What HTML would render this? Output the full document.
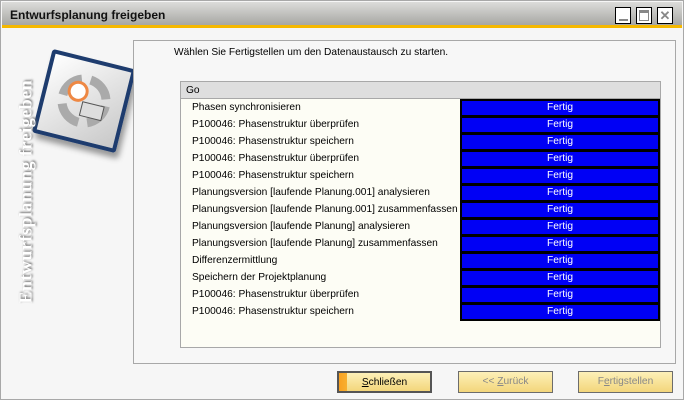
<!DOCTYPE html>
<html><head><meta charset="utf-8"><style>
*{margin:0;padding:0;box-sizing:border-box}
body{width:684px;height:400px;overflow:hidden;background:#fff;font-family:"Liberation Sans",sans-serif;font-size:10.2px;color:#000;position:relative}
.win{position:absolute;left:0;top:0;width:684px;height:400px;border:1px solid #a8a8a8;background:#f6f6f6}
.title{position:absolute;left:1px;top:1px;right:1px;height:26px;background:linear-gradient(#dcdcda,#a7a7a3);border-bottom:3px solid #f5b800}
.title span{position:absolute;left:8px;top:6px;font-weight:bold;font-size:12px;color:#111}
.wb{position:absolute;top:5px;width:16px;height:17px;border:1px solid #000;background:#fff}
.panel{position:absolute;left:132px;top:39px;width:543px;height:324px;border:1px solid #a8a8a8;background:#f7f7f7}
.msg{position:absolute;left:173px;top:46px}
.tbl{position:absolute;left:179px;top:80px;width:481px;height:267px;border:1px solid #a8a8a8;background:#fdfdf5}
.hdr{height:17px;background:#dedede;border-bottom:1px solid #a8a8a8;padding:3px 0 0 5px}
.row{position:relative;height:17px}
.row .l{position:absolute;left:11px;top:3px;white-space:nowrap}
.row .r{position:absolute;left:279px;top:0;width:200px;height:18px;background:#0000f5;border:2px solid #000;color:#fff;text-align:center;line-height:14px}
.btn{position:absolute;top:370px;width:95px;height:22px;border:1px solid #6c6c6c;background:linear-gradient(#fdf0b8,#f3d67b);text-align:center;line-height:20px;color:#888}
.logo{position:absolute;left:40px;top:57px;width:86px;height:86px;transform:rotate(14deg);border:4px solid #1e3c6e;border-radius:3px;background:linear-gradient(135deg,#fff,#c8c8c8);box-shadow:4px 5px 6px #999}
.vt{position:absolute;left:-95px;top:172px;width:240px;transform:rotate(-90deg);font-family:"Liberation Serif",serif;font-weight:bold;font-size:18px;color:#fff;text-shadow:1px 1px 2px #666;white-space:nowrap;letter-spacing:0.5px}
</style></head><body>
<div class="win">
<div class="title"><span>Entwurfsplanung freigeben</span>
<div class="wb" style="left:613px"><div style="position:absolute;left:3px;bottom:2px;width:9px;height:2px;background:#888"></div></div>
<div class="wb" style="left:634px"><div style="position:absolute;left:2px;top:2px;width:10px;height:11px;border:1px solid #888;border-top-width:3px"></div></div>
<div class="wb" style="left:655px;color:#888;font-weight:bold;text-align:center;line-height:15px;font-size:13px">✕</div>
</div>
<div class="logo"><svg width="78" height="78" viewBox="0 0 78 78"><circle cx="39" cy="39" r="22" fill="none" stroke="#aaa" stroke-width="9" stroke-dasharray="26 9"/><circle cx="31" cy="31" r="9" fill="#fff" stroke="#e84" stroke-width="3"/><rect x="38" y="40" width="22" height="14" fill="#ddd" stroke="#555"/></svg></div>
<div class="vt">Entwurfsplanung freigeben</div>
<div class="panel"></div>
<div class="msg">Wählen Sie Fertigstellen um den Datenaustausch zu starten.</div>
<div class="tbl">
<div class="hdr">Go</div>
<div class="row"><span class="l">Phasen synchronisieren</span><span class="r">Fertig</span></div>
<div class="row"><span class="l">P100046: Phasenstruktur überprüfen</span><span class="r">Fertig</span></div>
<div class="row"><span class="l">P100046: Phasenstruktur speichern</span><span class="r">Fertig</span></div>
<div class="row"><span class="l">P100046: Phasenstruktur überprüfen</span><span class="r">Fertig</span></div>
<div class="row"><span class="l">P100046: Phasenstruktur speichern</span><span class="r">Fertig</span></div>
<div class="row"><span class="l">Planungsversion [laufende Planung.001] analysieren</span><span class="r">Fertig</span></div>
<div class="row"><span class="l">Planungsversion [laufende Planung.001] zusammenfassen</span><span class="r">Fertig</span></div>
<div class="row"><span class="l">Planungsversion [laufende Planung] analysieren</span><span class="r">Fertig</span></div>
<div class="row"><span class="l">Planungsversion [laufende Planung] zusammenfassen</span><span class="r">Fertig</span></div>
<div class="row"><span class="l">Differenzermittlung</span><span class="r">Fertig</span></div>
<div class="row"><span class="l">Speichern der Projektplanung</span><span class="r">Fertig</span></div>
<div class="row"><span class="l">P100046: Phasenstruktur überprüfen</span><span class="r">Fertig</span></div>
<div class="row"><span class="l">P100046: Phasenstruktur speichern</span><span class="r">Fertig</span></div>
</div>
<div class="btn" style="left:336px;border:2px solid #555;color:#000;background:linear-gradient(90deg,#f8a020 0,#f8b030 8px,transparent 8px),linear-gradient(#fdf0b8,#f3d67b)"><u>S</u>chließen</div>
<div class="btn" style="left:457px">&lt;&lt; <u>Z</u>urück</div>
<div class="btn" style="left:577px">F<u>e</u>rtigstellen</div>
</div>
</body></html>
